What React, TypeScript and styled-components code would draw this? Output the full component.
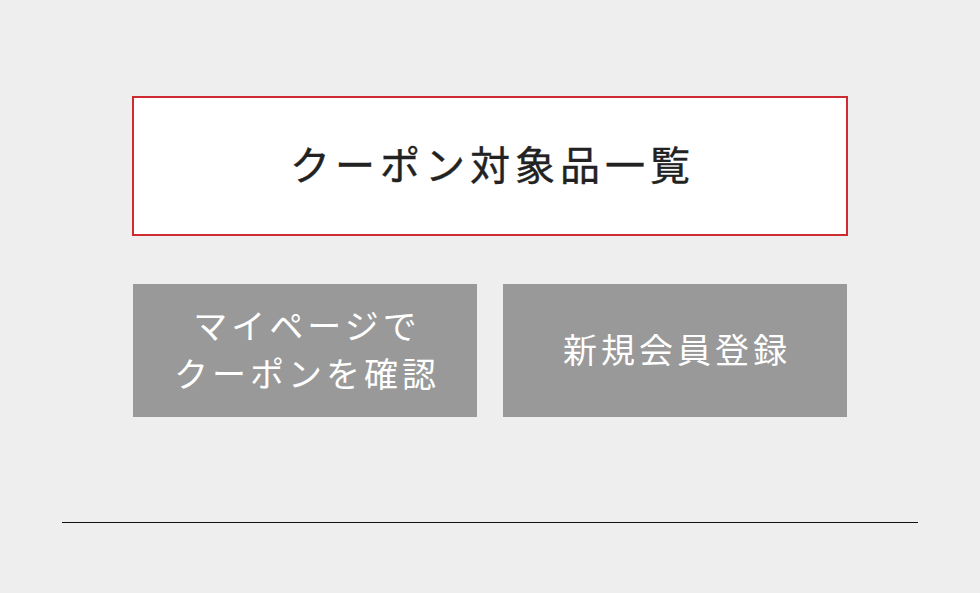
import React from "react";
import styled, { createGlobalStyle } from "styled-components";

const GlobalStyle = createGlobalStyle`
  html, body {
    margin: 0;
    padding: 0;
    background: #eeeeee;
  }
  body {
    font-family: "Noto Sans CJK JP", "Noto Sans", sans-serif;
  }
`;

const Screen = styled.div`
  width: 980px;
  height: 593px;
  background: #eeeeee;
  display: flex;
  flex-direction: column;
  align-items: center;
  padding-top: 96px;
  box-sizing: border-box;
`;

const Panel = styled.div`
  width: 716px;
  display: flex;
  flex-direction: column;
  gap: 48px;
`;

const CouponLink = styled.a`
  height: 140px;
  box-sizing: border-box;
  border: 2px solid #cf2a32;
  background: #ffffff;
  display: flex;
  align-items: center;
  justify-content: center;
  color: #222222;
  font-size: 40px;
  font-weight: 400;
  letter-spacing: 5px;
  -webkit-text-stroke: 0.4px #222222;
  text-decoration: none;
  padding: 0 0 6px 5px;
`;

const ButtonRow = styled.div`
  display: grid;
  grid-template-columns: 344px 344px;
  justify-content: space-between;
  padding: 0 1px;
`;

const GrayButton = styled.a`
  height: 133px;
  background: #999999;
  color: #ffffff;
  display: flex;
  align-items: center;
  justify-content: center;
  text-align: center;
  font-size: 34px;
  font-weight: 400;
  line-height: 48px;
  letter-spacing: 4px;
  padding: 0 0 3px 4px;
  box-sizing: border-box;
  text-decoration: none;
`;

const Divider = styled.hr`
  width: 856px;
  margin: 105px 0 0;
  border: none;
  border-top: 1px solid #111111;
`;

export default function App() {
  return (
    <>
      <GlobalStyle />
      <Screen>
        <Panel>
          <CouponLink href="#">クーポン対象品一覧</CouponLink>
          <ButtonRow>
            <GrayButton href="#">
              マイページで
              <br />
              クーポンを確認
            </GrayButton>
            <GrayButton href="#">新規会員登録</GrayButton>
          </ButtonRow>
        </Panel>
        <Divider />
      </Screen>
    </>
  );
}
